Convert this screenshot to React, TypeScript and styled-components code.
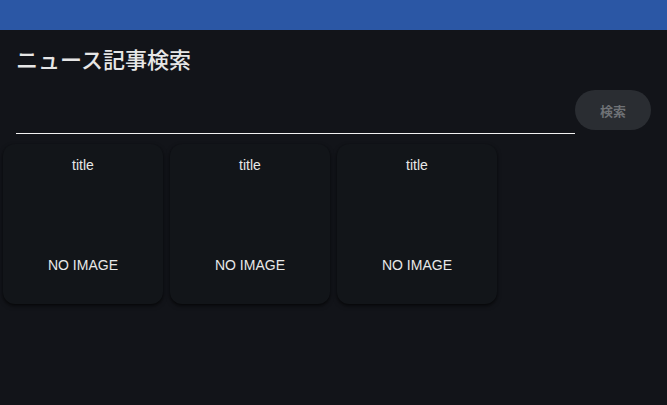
import React from "react";
import styled, { createGlobalStyle } from "styled-components";

const GlobalStyle = createGlobalStyle`
  html, body {
    margin: 0;
    padding: 0;
    background: #121419;
  }
  body {
    font-family: "Liberation Sans", "Noto Sans CJK JP", sans-serif;
    color: #e8e8e8;
  }
`;

const Page = styled.div`
  width: 667px;
  height: 405px;
  background: #121419;
  overflow: hidden;
`;

const TopBar = styled.header`
  height: 30px;
  background: #2b57a5;
`;

const Title = styled.h1`
  margin: 0;
  padding: 13px 16px 0;
  height: 30px;
  font-size: 22px;
  line-height: 30px;
  font-weight: 500;
  color: #e6e6e6;
  font-family: "Noto Sans CJK JP", sans-serif;
`;

const SearchRow = styled.div`
  display: flex;
  align-items: flex-start;
  padding: 17px 16px 0;
`;

const SearchInput = styled.input`
  flex: 0 0 559px;
  height: 44px;
  box-sizing: border-box;
  background: transparent;
  border: none;
  border-bottom: 1px solid #f2f2f2;
  color: #e8e8e8;
  font-size: 14px;
  outline: none;
  padding: 0;
`;

const SearchButton = styled.button`
  width: 76px;
  height: 40px;
  border: none;
  border-radius: 20px;
  background: #2a2d32;
  color: #6f7276;
  font-size: 13px;
  font-weight: 700;
  font-family: "Noto Sans CJK JP", sans-serif;
`;

const CardList = styled.div`
  display: flex;
  gap: 7px;
  padding: 10px 0 0 3px;
`;

const Card = styled.div`
  width: 160px;
  height: 160px;
  box-sizing: border-box;
  border-radius: 12px;
  background: #121519;
  box-shadow: 0 2px 4px rgba(0, 0, 0, 0.5), 0 1px 2px rgba(0, 0, 0, 0.3);
  display: flex;
  flex-direction: column;
  align-items: center;
  padding-top: 13px;
`;

const CardTitle = styled.div`
  font-size: 14px;
  line-height: 16px;
  color: #e8e8e8;
`;

const NoImage = styled.div`
  margin-top: 84px;
  font-size: 14px;
  line-height: 16px;
  color: #e8e8e8;
`;

const items = ["title", "title", "title"];

export default function App() {
  return (
    <Page>
      <GlobalStyle />
      <TopBar />
      <Title>ニュース記事検索</Title>
      <SearchRow>
        <SearchInput type="text" />
        <SearchButton disabled>検索</SearchButton>
      </SearchRow>
      <CardList>
        {items.map((t, i) => (
          <Card key={i}>
            <CardTitle>{t}</CardTitle>
            <NoImage>NO IMAGE</NoImage>
          </Card>
        ))}
      </CardList>
    </Page>
  );
}
